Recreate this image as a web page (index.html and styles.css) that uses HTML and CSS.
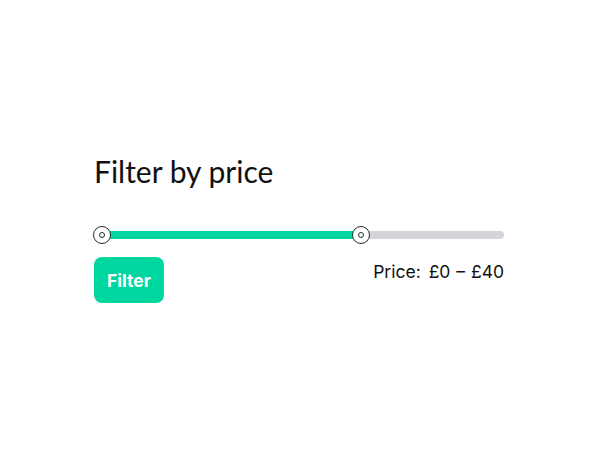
FILE: index.html
```html
<!DOCTYPE html>
<html>
<head>
<meta charset="utf-8">
<link rel="stylesheet" href="styles.css">
</head>
<body>
<div class="widget">
  <h2 class="title">Filter by price</h2>
  <div class="slider">
    <div class="track">
      <div class="range" style="width: 63.2%"></div>
    </div>
    <span class="handle" style="left: 0%"></span>
    <span class="handle" style="left: 63.2%"></span>
  </div>
  <div class="actions">
    <button class="btn">Filter</button>
    <div class="price">Price: <span class="amount">£0 – £40</span></div>
  </div>
</div>
</body>
</html>
```
FILE: styles.css
```css
html, body { margin: 0; padding: 0; background: #fff; }
body { font-family: "Inter", "Liberation Sans", sans-serif; color: #111; }
.widget { width: 410px; margin: 0 0 0 94px; padding-top: 151px; }
.title { margin: 0; font-family: "Lato", "Inter", sans-serif; font-weight: 400; font-size: 30px; line-height: 40px; color: #111; }
.slider { position: relative; margin-top: 40px; height: 8px; }
.track { height: 8px; background: #d4d4db; border-radius: 4px; overflow: hidden; }
.range { height: 100%; background: #00d6a0; }
.handle { position: absolute; top: -5px; width: 18px; height: 18px; margin-left: -1px; box-sizing: border-box; border: 1px solid #2a2a2a; border-radius: 50%; background: #fff; }
.handle::after { content: ""; position: absolute; left: 50%; top: 50%; width: 6px; height: 6px; margin: -3px 0 0 -3px; box-sizing: border-box; border: 1px solid #2a2a2a; border-radius: 50%; }
.actions { display: flex; justify-content: space-between; align-items: flex-start; margin-top: 18px; }
.btn { width: 70px; height: 46px; border: 0; border-radius: 8px; background: #00d6a0; color: #fff; font-family: "Inter", sans-serif; font-weight: 700; font-size: 17.5px; padding: 0; }
.price { font-size: 17.5px; line-height: 22px; margin-top: 4px; color: #111; word-spacing: 1px; }
.amount { margin-left: 2px; }
```
